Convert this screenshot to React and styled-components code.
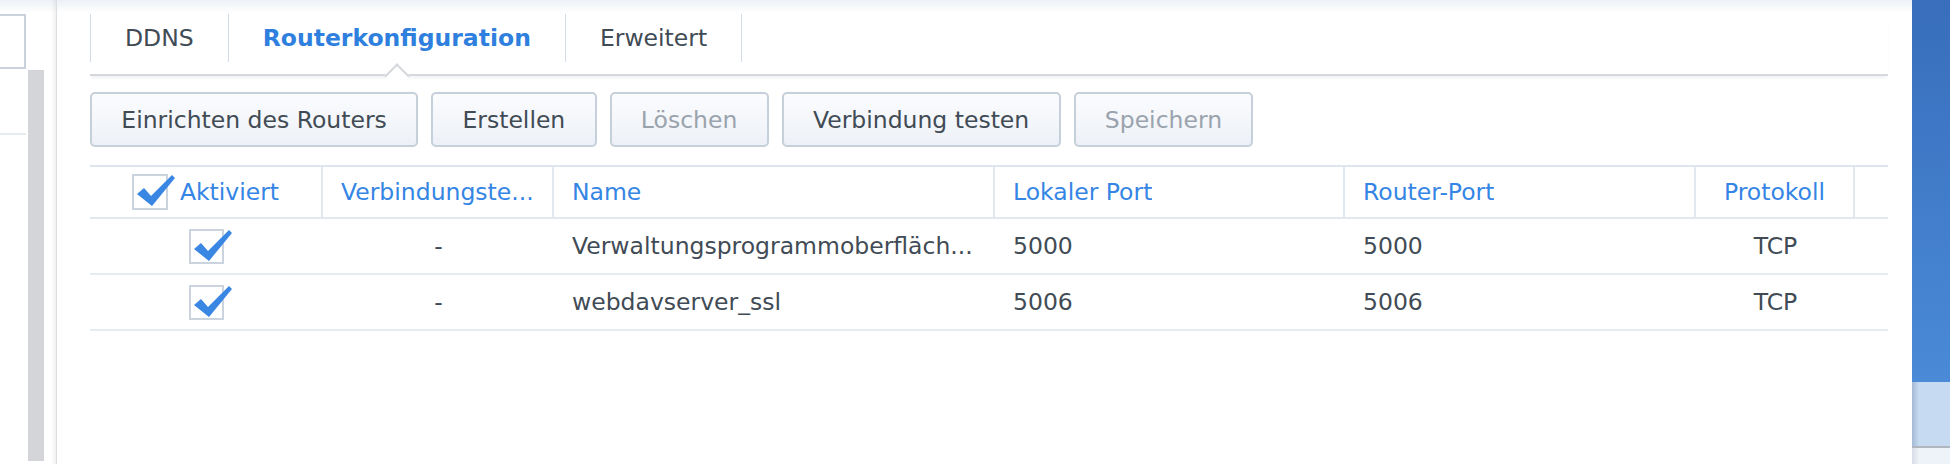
import React from "react";
import styled, { createGlobalStyle } from "styled-components";

const Global = createGlobalStyle`
  html, body { margin: 0; padding: 0; }
  body {
    font-family: "DejaVu Sans", "Liberation Sans", sans-serif;
    font-size: 23.5px;
    color: #414b55;
  }
  * { box-sizing: border-box; }
`;

const Page = styled.div`
  display: flex;
  width: 1950px;
  height: 464px;
  overflow: hidden;
  background: linear-gradient(#edf1f7 0, #ffffff 13px);
`;

const Sidebar = styled.div`
  width: 57px;
  flex-shrink: 0;
  display: flex;
`;

const SideList = styled.div`
  width: 26px;
  padding-top: 14px;
  display: flex;
  flex-direction: column;
`;

const SearchField = styled.div`
  height: 55px;
  border: 2px solid #c9d2dc;
  border-left: none;
  background: #fff;
`;

const SideItem = styled.div`
  height: 66px;
  border-bottom: 2px solid #e6ebf1;
`;

const ScrollThumb = styled.div`
  width: 16px;
  margin: 70px 0 3px 2px;
  background: #d3d5d8;
`;

const SideEdge = styled.div`
  margin-left: auto;
  width: 6px;
  background: linear-gradient(to right, rgba(0, 0, 0, 0), rgba(0, 0, 0, 0.06));
  border-right: 1px solid #dcdee1;
`;

const Main = styled.div`
  flex: 1;
  min-width: 0;
  display: flex;
  flex-direction: column;
  padding: 14px 24px 0 33px;
`;

const TabBar = styled.div`
  display: flex;
  height: 62px;
  border-bottom: 2px solid #d5d9de;
  box-shadow: 0 3px 3px -1px rgba(0, 0, 0, 0.06);
`;

const Tab = styled.div`
  position: relative;
  height: 48px;
  padding: 0 34px;
  display: flex;
  align-items: center;
  border-right: 1px solid #d3dce6;
  &:first-child { border-left: 1px solid #d3dce6; }
  color: ${(p) => (p.$active ? "#2f7fde" : "#414b55")};
  font-weight: ${(p) => (p.$active ? 700 : 400)};
  white-space: nowrap;
`;

const Caret = styled.span`
  position: absolute;
  left: calc(50% - 9px);
  top: 53px;
  width: 18px;
  height: 18px;
  background: #fff;
  border-top: 2px solid #d5d9de;
  border-left: 2px solid #d5d9de;
  transform: rotate(45deg);
  z-index: 1;
`;

const Toolbar = styled.div`
  display: flex;
  gap: 13px;
  margin-top: 16px;
`;

const Button = styled.button`
  height: 55px;
  padding: 0 29.3px;
  border: 2px solid #c6d0da;
  border-radius: 5px;
  background: linear-gradient(#fbfcfe, #edf1f7);
  font-family: inherit;
  font-size: 23.5px;
  color: ${(p) => (p.disabled ? "#9aa3ad" : "#414b55")};
  white-space: nowrap;
`;

const Table = styled.div`
  margin-top: 18px;
`;

const COLS = "233px 231px 441px 350px 351px 159px 1fr";

const HeaderRow = styled.div`
  display: grid;
  grid-template-columns: ${COLS};
  border-top: 2px solid #dde5ee;
  border-bottom: 2px solid #e1e8f0;
`;

const HeaderCell = styled.div`
  height: 50px;
  padding: ${(p) => (p.$center ? "0 14px" : "0 12px 0 18px")};
  display: flex;
  align-items: center;
  justify-content: ${(p) => (p.$center ? "center" : "flex-start")};
  gap: 12px;
  border-right: ${(p) => (p.$last ? "none" : "2px solid #e1e8f0")};
  color: #3585e5;
  min-width: 0;
`;

const Label = styled.span`
  overflow: hidden;
  white-space: nowrap;
  text-overflow: ellipsis;
`;

const Row = styled.div`
  display: grid;
  grid-template-columns: ${COLS};
  border-bottom: 2px solid #e6ebf1;
`;

const Cell = styled.div`
  height: 54px;
  padding: ${(p) => (p.$center ? "0 14px" : "0 12px 0 18px")};
  display: flex;
  align-items: center;
  justify-content: ${(p) => (p.$center ? "center" : "flex-start")};
  min-width: 0;
  color: #414b55;
`;

const Box = styled.span`
  position: relative;
  flex-shrink: 0;
  width: ${(p) => p.$size}px;
  height: ${(p) => p.$size}px;
  border: 2px solid #cbd4de;
  background: #fff;
`;

const Tick = styled.svg`
  position: absolute;
  left: 1px;
  top: -4px;
  overflow: visible;
`;

const RightStrip = styled.div`
  width: 38px;
  flex-shrink: 0;
  display: flex;
  flex-direction: column;
`;

const BlueTop = styled.div`
  height: 382px;
  background: linear-gradient(#386ebc, #4a8ad7);
`;

const PaleBand = styled.div`
  height: 64px;
  background: linear-gradient(to right, #a4b9d4, #c6daf1 7px);
`;

const GrayLine = styled.div`
  height: 2px;
  background: #b0b6bd;
`;

const PaleBottom = styled.div`
  flex: 1;
  background: linear-gradient(to right, #d6dde6, #eef3f9 7px);
`;

function Checkbox({ size = 35 }) {
  return (
    <Box $size={size}>
      <Tick width="44" height="40" viewBox="0 0 44 40">
        <polygon points="2,22 9,16 16,24 37,3 40,6 17,34" fill="#3a86e3" />
      </Tick>
    </Box>
  );
}

const rows = [
  {
    name: "Verwaltungsprogrammoberfläche",
    shown: "Verwaltungsprogrammoberfläch...",
    local: "5000",
    router: "5000",
    proto: "TCP",
  },
  {
    name: "webdavserver_ssl",
    shown: "webdavserver_ssl",
    local: "5006",
    router: "5006",
    proto: "TCP",
  },
];

export default function App() {
  return (
    <>
      <Global />
      <Page>
        <Sidebar>
          <SideList>
            <SearchField />
            <SideItem />
          </SideList>
          <ScrollThumb />
          <SideEdge />
        </Sidebar>
        <Main>
          <TabBar>
            <Tab>DDNS</Tab>
            <Tab $active>
              Routerkonfiguration
              <Caret />
            </Tab>
            <Tab>Erweitert</Tab>
          </TabBar>
          <Toolbar>
            <Button>Einrichten des Routers</Button>
            <Button>Erstellen</Button>
            <Button disabled>Löschen</Button>
            <Button>Verbindung testen</Button>
            <Button disabled>Speichern</Button>
          </Toolbar>
          <Table>
            <HeaderRow>
              <HeaderCell $center>
                <Checkbox size={36} />
                <Label>Aktiviert</Label>
              </HeaderCell>
              <HeaderCell>
                <Label title="Verbindungstest">Verbindungste...</Label>
              </HeaderCell>
              <HeaderCell>
                <Label>Name</Label>
              </HeaderCell>
              <HeaderCell>
                <Label>Lokaler Port</Label>
              </HeaderCell>
              <HeaderCell>
                <Label>Router-Port</Label>
              </HeaderCell>
              <HeaderCell $center>
                <Label>Protokoll</Label>
              </HeaderCell>
              <HeaderCell $last />
            </HeaderRow>
            {rows.map((r) => (
              <Row key={r.name}>
                <Cell $center>
                  <Checkbox />
                </Cell>
                <Cell $center>-</Cell>
                <Cell>
                  <Label title={r.name}>{r.shown}</Label>
                </Cell>
                <Cell>{r.local}</Cell>
                <Cell>{r.router}</Cell>
                <Cell $center>{r.proto}</Cell>
                <Cell />
              </Row>
            ))}
          </Table>
        </Main>
        <RightStrip>
          <BlueTop />
          <PaleBand />
          <GrayLine />
          <PaleBottom />
        </RightStrip>
      </Page>
    </>
  );
}
